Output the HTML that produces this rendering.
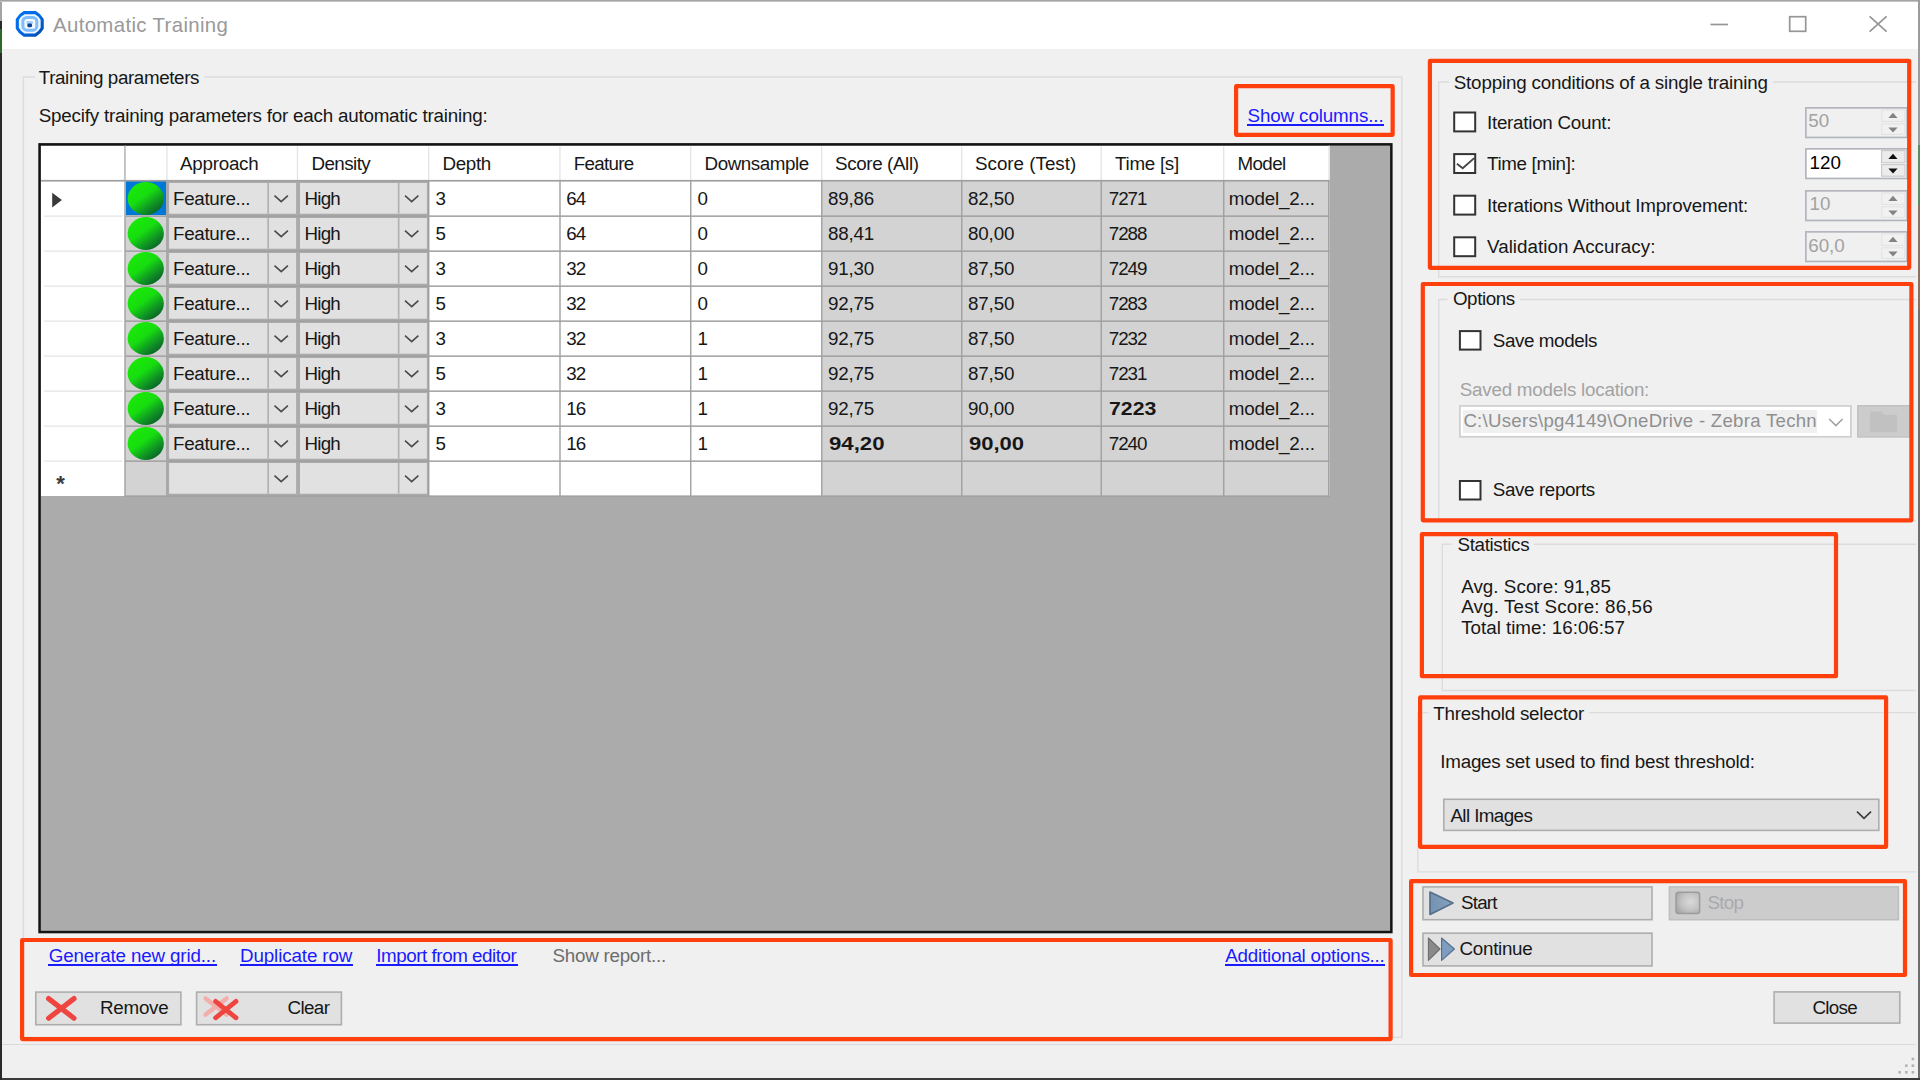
<!DOCTYPE html>
<html lang="en"><head><meta charset="utf-8"><title>Automatic Training</title>
<style>
html,body{margin:0;padding:0;}
body{width:1920px;height:1080px;overflow:hidden;background:#2b2b2b;position:relative;font-family:"Liberation Sans",Arial,sans-serif;}
.b{position:absolute;box-sizing:border-box;}
.t{position:absolute;white-space:pre;}
.ul{position:absolute;height:2px;display:block;}
svg{position:absolute;overflow:visible;}
</style></head><body>
<!-- window -->
<div class="b" style="left:0px;top:0px;width:1920px;height:1px;background:#a8a8a8;"></div>
<div class="b" style="left:2px;top:1px;width:1916px;height:48px;background:#ffffff;"></div>
<div class="b" style="left:2px;top:49px;width:1916px;height:1028.5px;background:#f0f0f0;"></div>
<div class="b" style="left:1918px;top:0px;width:2px;height:1078px;background:#9c9c9c;"></div>
<div class="b" style="left:1918px;top:145px;width:2px;height:933px;background:#5f7a5f;"></div>
<div class="b" style="left:0px;top:1077.5px;width:1920px;height:3px;background:#3a3a3a;"></div>
<div class="b" style="left:0px;top:0px;width:2px;height:1080px;background:#2a2a2a;"></div>
<div class="b" style="left:0px;top:0px;width:2px;height:21px;background:#a3a3a3;"></div>
<div class="b" style="left:0px;top:29px;width:2px;height:24px;background:#2c6a2c;"></div>
<div class="b" style="left:0px;top:0px;width:1920px;height:2px;background:#c4c4c4;"></div>
<div class="b" style="left:0px;top:0px;width:1920px;height:1px;background:#a3a3a3;"></div>
<svg style="left:12px;top:8px" width="36" height="32" viewBox="12 8 36 32">
<defs><linearGradient id="ti" x1="0" y1="0" x2="1" y2="1"><stop offset="0" stop-color="#0072f0"/><stop offset="0.55" stop-color="#0068e2"/><stop offset="1" stop-color="#004aa8"/></linearGradient></defs>
<path d="M24.10 12.60L35.40 12.60Q39.82 14.98 42.20 19.40L42.20 28.30Q39.82 32.72 35.40 35.10L24.10 35.10Q19.68 32.72 17.30 28.30L17.30 19.40Q19.68 14.98 24.10 12.60Z" fill="#eef6ff" stroke="url(#ti)" stroke-width="3.1" stroke-linejoin="round"/>
<rect x="22.9" y="17.5" width="13.9" height="12.7" rx="4" fill="#f4f9ff" stroke="#7fbdff" stroke-width="3"/>
<rect x="26.4" y="21" width="6.6" height="3" rx="1.2" fill="#a4d0ff"/>
<rect x="27.3" y="23.5" width="4.8" height="3.7" rx="1.4" fill="#0a4394"/>
</svg>
<span class="t" style="left:53.00px;top:13.00px;font-size:20.4px;line-height:24px;color:#999999;letter-spacing:0.353px;">Automatic Training</span>
<svg style="left:1700px;top:8px" width="200" height="34" viewBox="1700 8 200 34">
<path d="M1710.5 24.5H1728" stroke="#959595" stroke-width="1.7" fill="none"/>
<rect x="1789.7" y="16.7" width="16" height="14.6" stroke="#959595" stroke-width="1.7" fill="none"/>
<path d="M1869.6 16.4L1886.6 31.6M1886.6 16.4L1869.6 31.6" stroke="#959595" stroke-width="1.7" fill="none"/>
</svg>
<!-- training parameters -->
<svg style="left:0;top:0" width="1920" height="1080" viewBox="0 0 1920 1080"><path d="M35 77H23.4V1037.4H1401.8V77H204.4" fill="none" stroke="#dcdcdc" stroke-width="1.4"/></svg>
<span class="t" style="left:38.75px;top:66.00px;font-size:18.8px;line-height:23px;color:#171717;letter-spacing:-0.369px;">Training parameters</span>
<span class="t" style="left:38.75px;top:104.00px;font-size:18.8px;line-height:23px;color:#171717;letter-spacing:-0.209px;">Specify training parameters for each automatic training:</span>
<span class="t" style="left:1247.50px;top:104.00px;font-size:18.8px;line-height:23px;color:#1a1aff;letter-spacing:-0.118px;">Show columns...</span>
<i class="ul" style="left:1247.00px;top:124.20px;width:137.25px;background:#1a1aff"></i>
<!-- data grid -->
<div class="b" style="left:39px;top:144px;width:1353px;height:789px;background:#ababab;"></div>
<svg style="left:0;top:0" width="1920" height="1080" viewBox="0 0 1920 1080"><rect x="39.55" y="144.35" width="1351.8" height="787.6999999999999" fill="none" stroke="#141414" stroke-width="2.5"/></svg>
<div class="b" style="left:41px;top:145.5px;width:1288.55px;height:34.69999999999999px;background:#ffffff;"></div>
<div class="b" style="left:41px;top:180.2px;width:84px;height:315.40000000000003px;background:#ffffff;"></div>
<div class="b" style="left:125px;top:180.2px;width:42px;height:315.40000000000003px;background:#d3d3d3;"></div>
<div class="b" style="left:167px;top:180.2px;width:261.75px;height:315.40000000000003px;background:#ababab;"></div>
<div class="b" style="left:428.75px;top:180.2px;width:393.0px;height:315.40000000000003px;background:#ffffff;"></div>
<div class="b" style="left:821.75px;top:180.2px;width:507.8px;height:315.40000000000003px;background:#d3d3d3;"></div>
<div class="b" style="left:125.6px;top:181.29999999999998px;width:40.6px;height:33.6px;background:#0078d7;"></div>
<svg style="left:0;top:0" width="1920" height="1080" viewBox="0 0 1920 1080">
<defs><linearGradient id="gb" x1="0.2" y1="0.1" x2="0.85" y2="0.9"><stop offset="0" stop-color="#18ea06"/><stop offset="0.4" stop-color="#17dd10"/><stop offset="0.75" stop-color="#0f9224"/><stop offset="1" stop-color="#0a6228"/></linearGradient>
</defs>
<rect x="166.30" y="146.5" width="1.3" height="33.70" fill="#e4e4e4"/>
<rect x="296.80" y="146.5" width="1.3" height="33.70" fill="#e4e4e4"/>
<rect x="428.05" y="146.5" width="1.3" height="33.70" fill="#e4e4e4"/>
<rect x="559.30" y="146.5" width="1.3" height="33.70" fill="#e4e4e4"/>
<rect x="690.05" y="146.5" width="1.3" height="33.70" fill="#e4e4e4"/>
<rect x="821.05" y="146.5" width="1.3" height="33.70" fill="#e4e4e4"/>
<rect x="961.05" y="146.5" width="1.3" height="33.70" fill="#e4e4e4"/>
<rect x="1100.55" y="146.5" width="1.3" height="33.70" fill="#e4e4e4"/>
<rect x="1223.05" y="146.5" width="1.3" height="33.70" fill="#e4e4e4"/>
<rect x="124.30" y="145.5" width="1.3" height="34.70" fill="#a6a6a6"/>
<rect x="1328.55" y="145.5" width="1.1" height="34.70" fill="#d8d8d8"/>
<rect x="41" y="179.90" width="1288.55" height="1.7" fill="#a0a0a0"/>
<rect x="44" y="215.50" width="78.6" height="1.3" fill="#e6e6e6"/>
<rect x="125" y="215.40" width="1204.55" height="1.5" fill="#a0a0a0"/>
<rect x="44" y="250.50" width="78.6" height="1.3" fill="#e6e6e6"/>
<rect x="125" y="250.40" width="1204.55" height="1.5" fill="#a0a0a0"/>
<rect x="44" y="285.50" width="78.6" height="1.3" fill="#e6e6e6"/>
<rect x="125" y="285.40" width="1204.55" height="1.5" fill="#a0a0a0"/>
<rect x="44" y="320.50" width="78.6" height="1.3" fill="#e6e6e6"/>
<rect x="125" y="320.40" width="1204.55" height="1.5" fill="#a0a0a0"/>
<rect x="44" y="355.50" width="78.6" height="1.3" fill="#e6e6e6"/>
<rect x="125" y="355.40" width="1204.55" height="1.5" fill="#a0a0a0"/>
<rect x="44" y="390.50" width="78.6" height="1.3" fill="#e6e6e6"/>
<rect x="125" y="390.40" width="1204.55" height="1.5" fill="#a0a0a0"/>
<rect x="44" y="425.50" width="78.6" height="1.3" fill="#e6e6e6"/>
<rect x="125" y="425.40" width="1204.55" height="1.5" fill="#a0a0a0"/>
<rect x="44" y="460.50" width="78.6" height="1.3" fill="#e6e6e6"/>
<rect x="125" y="460.40" width="1204.55" height="1.5" fill="#a0a0a0"/>
<rect x="125" y="495.40" width="1204.55" height="1.5" fill="#a0a0a0"/>
<rect x="124.30" y="180.2" width="1.4" height="316.40" fill="#a0a0a0"/>
<rect x="428.05" y="180.2" width="1.4" height="316.40" fill="#a0a0a0"/>
<rect x="559.30" y="180.2" width="1.4" height="316.40" fill="#a0a0a0"/>
<rect x="690.05" y="180.2" width="1.4" height="316.40" fill="#a0a0a0"/>
<rect x="821.05" y="180.2" width="1.4" height="316.40" fill="#a0a0a0"/>
<rect x="961.05" y="180.2" width="1.4" height="316.40" fill="#a0a0a0"/>
<rect x="1100.55" y="180.2" width="1.4" height="316.40" fill="#a0a0a0"/>
<rect x="1223.05" y="180.2" width="1.4" height="316.40" fill="#a0a0a0"/>
<rect x="1328.05" y="180.2" width="1.4" height="316.40" fill="#a0a0a0"/>
<rect x="166.10" y="180.2" width="1.6" height="316.40" fill="#a6a6a6"/>
<ellipse cx="145.75" cy="198.50" rx="18.1" ry="16.4" fill="url(#gb)"/>
<ellipse cx="145.75" cy="233.50" rx="18.1" ry="16.4" fill="url(#gb)"/>
<ellipse cx="145.75" cy="268.50" rx="18.1" ry="16.4" fill="url(#gb)"/>
<ellipse cx="145.75" cy="303.50" rx="18.1" ry="16.4" fill="url(#gb)"/>
<ellipse cx="145.75" cy="338.50" rx="18.1" ry="16.4" fill="url(#gb)"/>
<ellipse cx="145.75" cy="373.50" rx="18.1" ry="16.4" fill="url(#gb)"/>
<ellipse cx="145.75" cy="408.50" rx="18.1" ry="16.4" fill="url(#gb)"/>
<ellipse cx="145.75" cy="443.50" rx="18.1" ry="16.4" fill="url(#gb)"/>
<rect x="169.10" y="183.00" width="127.00" height="30.70" fill="#e1e1e1"/>
<rect x="267.30" y="183.00" width="1.7" height="30.70" fill="#b2b2b2"/>
<path d="M274.50 195.70L281.20 201.70L287.90 195.70" stroke="#4a4a4a" stroke-width="1.6" fill="none"/>
<rect x="300.00" y="183.00" width="126.90" height="30.70" fill="#e1e1e1"/>
<rect x="397.80" y="183.00" width="1.7" height="30.70" fill="#b2b2b2"/>
<path d="M405.00 195.70L411.70 201.70L418.40 195.70" stroke="#4a4a4a" stroke-width="1.6" fill="none"/>
<rect x="169.10" y="218.00" width="127.00" height="30.70" fill="#e1e1e1"/>
<rect x="267.30" y="218.00" width="1.7" height="30.70" fill="#b2b2b2"/>
<path d="M274.50 230.70L281.20 236.70L287.90 230.70" stroke="#4a4a4a" stroke-width="1.6" fill="none"/>
<rect x="300.00" y="218.00" width="126.90" height="30.70" fill="#e1e1e1"/>
<rect x="397.80" y="218.00" width="1.7" height="30.70" fill="#b2b2b2"/>
<path d="M405.00 230.70L411.70 236.70L418.40 230.70" stroke="#4a4a4a" stroke-width="1.6" fill="none"/>
<rect x="169.10" y="253.00" width="127.00" height="30.70" fill="#e1e1e1"/>
<rect x="267.30" y="253.00" width="1.7" height="30.70" fill="#b2b2b2"/>
<path d="M274.50 265.70L281.20 271.70L287.90 265.70" stroke="#4a4a4a" stroke-width="1.6" fill="none"/>
<rect x="300.00" y="253.00" width="126.90" height="30.70" fill="#e1e1e1"/>
<rect x="397.80" y="253.00" width="1.7" height="30.70" fill="#b2b2b2"/>
<path d="M405.00 265.70L411.70 271.70L418.40 265.70" stroke="#4a4a4a" stroke-width="1.6" fill="none"/>
<rect x="169.10" y="288.00" width="127.00" height="30.70" fill="#e1e1e1"/>
<rect x="267.30" y="288.00" width="1.7" height="30.70" fill="#b2b2b2"/>
<path d="M274.50 300.70L281.20 306.70L287.90 300.70" stroke="#4a4a4a" stroke-width="1.6" fill="none"/>
<rect x="300.00" y="288.00" width="126.90" height="30.70" fill="#e1e1e1"/>
<rect x="397.80" y="288.00" width="1.7" height="30.70" fill="#b2b2b2"/>
<path d="M405.00 300.70L411.70 306.70L418.40 300.70" stroke="#4a4a4a" stroke-width="1.6" fill="none"/>
<rect x="169.10" y="323.00" width="127.00" height="30.70" fill="#e1e1e1"/>
<rect x="267.30" y="323.00" width="1.7" height="30.70" fill="#b2b2b2"/>
<path d="M274.50 335.70L281.20 341.70L287.90 335.70" stroke="#4a4a4a" stroke-width="1.6" fill="none"/>
<rect x="300.00" y="323.00" width="126.90" height="30.70" fill="#e1e1e1"/>
<rect x="397.80" y="323.00" width="1.7" height="30.70" fill="#b2b2b2"/>
<path d="M405.00 335.70L411.70 341.70L418.40 335.70" stroke="#4a4a4a" stroke-width="1.6" fill="none"/>
<rect x="169.10" y="358.00" width="127.00" height="30.70" fill="#e1e1e1"/>
<rect x="267.30" y="358.00" width="1.7" height="30.70" fill="#b2b2b2"/>
<path d="M274.50 370.70L281.20 376.70L287.90 370.70" stroke="#4a4a4a" stroke-width="1.6" fill="none"/>
<rect x="300.00" y="358.00" width="126.90" height="30.70" fill="#e1e1e1"/>
<rect x="397.80" y="358.00" width="1.7" height="30.70" fill="#b2b2b2"/>
<path d="M405.00 370.70L411.70 376.70L418.40 370.70" stroke="#4a4a4a" stroke-width="1.6" fill="none"/>
<rect x="169.10" y="393.00" width="127.00" height="30.70" fill="#e1e1e1"/>
<rect x="267.30" y="393.00" width="1.7" height="30.70" fill="#b2b2b2"/>
<path d="M274.50 405.70L281.20 411.70L287.90 405.70" stroke="#4a4a4a" stroke-width="1.6" fill="none"/>
<rect x="300.00" y="393.00" width="126.90" height="30.70" fill="#e1e1e1"/>
<rect x="397.80" y="393.00" width="1.7" height="30.70" fill="#b2b2b2"/>
<path d="M405.00 405.70L411.70 411.70L418.40 405.70" stroke="#4a4a4a" stroke-width="1.6" fill="none"/>
<rect x="169.10" y="428.00" width="127.00" height="30.70" fill="#e1e1e1"/>
<rect x="267.30" y="428.00" width="1.7" height="30.70" fill="#b2b2b2"/>
<path d="M274.50 440.70L281.20 446.70L287.90 440.70" stroke="#4a4a4a" stroke-width="1.6" fill="none"/>
<rect x="300.00" y="428.00" width="126.90" height="30.70" fill="#e1e1e1"/>
<rect x="397.80" y="428.00" width="1.7" height="30.70" fill="#b2b2b2"/>
<path d="M405.00 440.70L411.70 446.70L418.40 440.70" stroke="#4a4a4a" stroke-width="1.6" fill="none"/>
<rect x="169.10" y="463.00" width="127.00" height="30.70" fill="#e1e1e1"/>
<rect x="267.30" y="463.00" width="1.7" height="30.70" fill="#b2b2b2"/>
<path d="M274.50 475.70L281.20 481.70L287.90 475.70" stroke="#4a4a4a" stroke-width="1.6" fill="none"/>
<rect x="300.00" y="463.00" width="126.90" height="30.70" fill="#e1e1e1"/>
<rect x="397.80" y="463.00" width="1.7" height="30.70" fill="#b2b2b2"/>
<path d="M405.00 475.70L411.70 481.70L418.40 475.70" stroke="#4a4a4a" stroke-width="1.6" fill="none"/>
<path d="M52.2 192.8L61.9 200.1L52.2 207.4Z" fill="#3a3a3a"/>
</svg>
<span class="t" style="left:180.00px;top:152.00px;font-size:18.8px;line-height:23px;color:#171717;letter-spacing:-0.246px;">Approach</span>
<span class="t" style="left:311.50px;top:152.00px;font-size:18.8px;line-height:23px;color:#171717;letter-spacing:-0.570px;">Density</span>
<span class="t" style="left:442.50px;top:152.00px;font-size:18.8px;line-height:23px;color:#171717;letter-spacing:-0.352px;">Depth</span>
<span class="t" style="left:573.75px;top:152.00px;font-size:18.8px;line-height:23px;color:#171717;letter-spacing:-0.714px;">Feature</span>
<span class="t" style="left:704.50px;top:152.00px;font-size:18.8px;line-height:23px;color:#171717;letter-spacing:-0.434px;">Downsample</span>
<span class="t" style="left:835.00px;top:152.00px;font-size:18.8px;line-height:23px;color:#171717;letter-spacing:-0.373px;">Score (All)</span>
<span class="t" style="left:975.00px;top:152.00px;font-size:18.8px;line-height:23px;color:#171717;letter-spacing:-0.006px;">Score (Test)</span>
<span class="t" style="left:1115.00px;top:152.00px;font-size:18.8px;line-height:23px;color:#171717;letter-spacing:-0.270px;">Time [s]</span>
<span class="t" style="left:1237.50px;top:152.00px;font-size:18.8px;line-height:23px;color:#171717;letter-spacing:-0.613px;">Model</span>
<span class="t" style="left:173.00px;top:187.00px;font-size:18.8px;line-height:23px;color:#171717;letter-spacing:-0.317px;">Feature...</span>
<span class="t" style="left:304.50px;top:187.00px;font-size:18.8px;line-height:23px;color:#171717;letter-spacing:-0.802px;">High</span>
<span class="t" style="left:435.60px;top:187.00px;font-size:18.8px;line-height:23px;color:#171717;">3</span>
<span class="t" style="left:566.30px;top:187.00px;font-size:18.8px;line-height:23px;color:#171717;letter-spacing:-0.956px;">64</span>
<span class="t" style="left:697.60px;top:187.00px;font-size:18.8px;line-height:23px;color:#171717;">0</span>
<span class="t" style="left:828.00px;top:187.00px;font-size:18.8px;line-height:23px;color:#171717;letter-spacing:-0.195px;">89,86</span>
<span class="t" style="left:968.00px;top:187.00px;font-size:18.8px;line-height:23px;color:#171717;letter-spacing:-0.133px;">82,50</span>
<span class="t" style="left:1108.75px;top:187.00px;font-size:18.8px;line-height:23px;color:#171717;letter-spacing:-1.021px;">7271</span>
<span class="t" style="left:1228.75px;top:187.00px;font-size:18.8px;line-height:23px;color:#171717;letter-spacing:-0.168px;">model_2...</span>
<span class="t" style="left:173.00px;top:222.00px;font-size:18.8px;line-height:23px;color:#171717;letter-spacing:-0.317px;">Feature...</span>
<span class="t" style="left:304.50px;top:222.00px;font-size:18.8px;line-height:23px;color:#171717;letter-spacing:-0.802px;">High</span>
<span class="t" style="left:435.60px;top:222.00px;font-size:18.8px;line-height:23px;color:#171717;">5</span>
<span class="t" style="left:566.30px;top:222.00px;font-size:18.8px;line-height:23px;color:#171717;letter-spacing:-0.956px;">64</span>
<span class="t" style="left:697.60px;top:222.00px;font-size:18.8px;line-height:23px;color:#171717;">0</span>
<span class="t" style="left:828.00px;top:222.00px;font-size:18.8px;line-height:23px;color:#171717;letter-spacing:-0.195px;">88,41</span>
<span class="t" style="left:968.00px;top:222.00px;font-size:18.8px;line-height:23px;color:#171717;letter-spacing:-0.133px;">80,00</span>
<span class="t" style="left:1108.75px;top:222.00px;font-size:18.8px;line-height:23px;color:#171717;letter-spacing:-1.021px;">7288</span>
<span class="t" style="left:1228.75px;top:222.00px;font-size:18.8px;line-height:23px;color:#171717;letter-spacing:-0.168px;">model_2...</span>
<span class="t" style="left:173.00px;top:257.00px;font-size:18.8px;line-height:23px;color:#171717;letter-spacing:-0.317px;">Feature...</span>
<span class="t" style="left:304.50px;top:257.00px;font-size:18.8px;line-height:23px;color:#171717;letter-spacing:-0.802px;">High</span>
<span class="t" style="left:435.60px;top:257.00px;font-size:18.8px;line-height:23px;color:#171717;">3</span>
<span class="t" style="left:566.30px;top:257.00px;font-size:18.8px;line-height:23px;color:#171717;letter-spacing:-0.956px;">32</span>
<span class="t" style="left:697.60px;top:257.00px;font-size:18.8px;line-height:23px;color:#171717;">0</span>
<span class="t" style="left:828.00px;top:257.00px;font-size:18.8px;line-height:23px;color:#171717;letter-spacing:-0.195px;">91,30</span>
<span class="t" style="left:968.00px;top:257.00px;font-size:18.8px;line-height:23px;color:#171717;letter-spacing:-0.133px;">87,50</span>
<span class="t" style="left:1108.75px;top:257.00px;font-size:18.8px;line-height:23px;color:#171717;letter-spacing:-1.021px;">7249</span>
<span class="t" style="left:1228.75px;top:257.00px;font-size:18.8px;line-height:23px;color:#171717;letter-spacing:-0.168px;">model_2...</span>
<span class="t" style="left:173.00px;top:292.00px;font-size:18.8px;line-height:23px;color:#171717;letter-spacing:-0.317px;">Feature...</span>
<span class="t" style="left:304.50px;top:292.00px;font-size:18.8px;line-height:23px;color:#171717;letter-spacing:-0.802px;">High</span>
<span class="t" style="left:435.60px;top:292.00px;font-size:18.8px;line-height:23px;color:#171717;">5</span>
<span class="t" style="left:566.30px;top:292.00px;font-size:18.8px;line-height:23px;color:#171717;letter-spacing:-0.956px;">32</span>
<span class="t" style="left:697.60px;top:292.00px;font-size:18.8px;line-height:23px;color:#171717;">0</span>
<span class="t" style="left:828.00px;top:292.00px;font-size:18.8px;line-height:23px;color:#171717;letter-spacing:-0.195px;">92,75</span>
<span class="t" style="left:968.00px;top:292.00px;font-size:18.8px;line-height:23px;color:#171717;letter-spacing:-0.133px;">87,50</span>
<span class="t" style="left:1108.75px;top:292.00px;font-size:18.8px;line-height:23px;color:#171717;letter-spacing:-1.021px;">7283</span>
<span class="t" style="left:1228.75px;top:292.00px;font-size:18.8px;line-height:23px;color:#171717;letter-spacing:-0.168px;">model_2...</span>
<span class="t" style="left:173.00px;top:327.00px;font-size:18.8px;line-height:23px;color:#171717;letter-spacing:-0.317px;">Feature...</span>
<span class="t" style="left:304.50px;top:327.00px;font-size:18.8px;line-height:23px;color:#171717;letter-spacing:-0.802px;">High</span>
<span class="t" style="left:435.60px;top:327.00px;font-size:18.8px;line-height:23px;color:#171717;">3</span>
<span class="t" style="left:566.30px;top:327.00px;font-size:18.8px;line-height:23px;color:#171717;letter-spacing:-0.956px;">32</span>
<span class="t" style="left:697.60px;top:327.00px;font-size:18.8px;line-height:23px;color:#171717;">1</span>
<span class="t" style="left:828.00px;top:327.00px;font-size:18.8px;line-height:23px;color:#171717;letter-spacing:-0.195px;">92,75</span>
<span class="t" style="left:968.00px;top:327.00px;font-size:18.8px;line-height:23px;color:#171717;letter-spacing:-0.133px;">87,50</span>
<span class="t" style="left:1108.75px;top:327.00px;font-size:18.8px;line-height:23px;color:#171717;letter-spacing:-1.021px;">7232</span>
<span class="t" style="left:1228.75px;top:327.00px;font-size:18.8px;line-height:23px;color:#171717;letter-spacing:-0.168px;">model_2...</span>
<span class="t" style="left:173.00px;top:362.00px;font-size:18.8px;line-height:23px;color:#171717;letter-spacing:-0.317px;">Feature...</span>
<span class="t" style="left:304.50px;top:362.00px;font-size:18.8px;line-height:23px;color:#171717;letter-spacing:-0.802px;">High</span>
<span class="t" style="left:435.60px;top:362.00px;font-size:18.8px;line-height:23px;color:#171717;">5</span>
<span class="t" style="left:566.30px;top:362.00px;font-size:18.8px;line-height:23px;color:#171717;letter-spacing:-0.956px;">32</span>
<span class="t" style="left:697.60px;top:362.00px;font-size:18.8px;line-height:23px;color:#171717;">1</span>
<span class="t" style="left:828.00px;top:362.00px;font-size:18.8px;line-height:23px;color:#171717;letter-spacing:-0.195px;">92,75</span>
<span class="t" style="left:968.00px;top:362.00px;font-size:18.8px;line-height:23px;color:#171717;letter-spacing:-0.133px;">87,50</span>
<span class="t" style="left:1108.75px;top:362.00px;font-size:18.8px;line-height:23px;color:#171717;letter-spacing:-1.021px;">7231</span>
<span class="t" style="left:1228.75px;top:362.00px;font-size:18.8px;line-height:23px;color:#171717;letter-spacing:-0.168px;">model_2...</span>
<span class="t" style="left:173.00px;top:397.00px;font-size:18.8px;line-height:23px;color:#171717;letter-spacing:-0.317px;">Feature...</span>
<span class="t" style="left:304.50px;top:397.00px;font-size:18.8px;line-height:23px;color:#171717;letter-spacing:-0.802px;">High</span>
<span class="t" style="left:435.60px;top:397.00px;font-size:18.8px;line-height:23px;color:#171717;">3</span>
<span class="t" style="left:566.30px;top:397.00px;font-size:18.8px;line-height:23px;color:#171717;letter-spacing:-0.956px;">16</span>
<span class="t" style="left:697.60px;top:397.00px;font-size:18.8px;line-height:23px;color:#171717;">1</span>
<span class="t" style="left:828.00px;top:397.00px;font-size:18.8px;line-height:23px;color:#171717;letter-spacing:-0.195px;">92,75</span>
<span class="t" style="left:968.00px;top:397.00px;font-size:18.8px;line-height:23px;color:#171717;letter-spacing:-0.133px;">90,00</span>
<span class="t" style="left:1108.90px;top:397.00px;font-size:18.5px;line-height:23px;color:#171717;font-weight:bold;transform:scaleX(1.1505);transform-origin:0 0;">7223</span>
<span class="t" style="left:1228.75px;top:397.00px;font-size:18.8px;line-height:23px;color:#171717;letter-spacing:-0.168px;">model_2...</span>
<span class="t" style="left:173.00px;top:432.00px;font-size:18.8px;line-height:23px;color:#171717;letter-spacing:-0.317px;">Feature...</span>
<span class="t" style="left:304.50px;top:432.00px;font-size:18.8px;line-height:23px;color:#171717;letter-spacing:-0.802px;">High</span>
<span class="t" style="left:435.60px;top:432.00px;font-size:18.8px;line-height:23px;color:#171717;">5</span>
<span class="t" style="left:566.30px;top:432.00px;font-size:18.8px;line-height:23px;color:#171717;letter-spacing:-0.956px;">16</span>
<span class="t" style="left:697.60px;top:432.00px;font-size:18.8px;line-height:23px;color:#171717;">1</span>
<span class="t" style="left:828.90px;top:432.00px;font-size:18.5px;line-height:23px;color:#171717;font-weight:bold;transform:scaleX(1.1988);transform-origin:0 0;">94,20</span>
<span class="t" style="left:968.90px;top:432.00px;font-size:18.5px;line-height:23px;color:#171717;font-weight:bold;transform:scaleX(1.1901);transform-origin:0 0;">90,00</span>
<span class="t" style="left:1108.75px;top:432.00px;font-size:18.8px;line-height:23px;color:#171717;letter-spacing:-1.021px;">7240</span>
<span class="t" style="left:1228.75px;top:432.00px;font-size:18.8px;line-height:23px;color:#171717;letter-spacing:-0.168px;">model_2...</span>
<span class="t" style="left:56.20px;top:470.00px;font-size:22px;line-height:27px;color:#3a3a3a;font-weight:bold;">*</span>
<!-- bottom actions -->
<span class="t" style="left:48.75px;top:944.00px;font-size:18.8px;line-height:23px;color:#1a1aff;letter-spacing:-0.148px;">Generate new grid...</span>
<i class="ul" style="left:48.25px;top:963.80px;width:168.50px;background:#1a1aff"></i>
<span class="t" style="left:240.00px;top:944.00px;font-size:18.8px;line-height:23px;color:#1a1aff;letter-spacing:-0.118px;">Duplicate row</span>
<i class="ul" style="left:239.50px;top:963.80px;width:113.50px;background:#1a1aff"></i>
<span class="t" style="left:376.25px;top:944.00px;font-size:18.8px;line-height:23px;color:#1a1aff;letter-spacing:-0.446px;">Import from editor</span>
<i class="ul" style="left:375.75px;top:963.80px;width:141.75px;background:#1a1aff"></i>
<span class="t" style="left:552.50px;top:944.00px;font-size:18.8px;line-height:23px;color:#6d6d6d;letter-spacing:-0.251px;">Show report...</span>
<span class="t" style="left:1225.30px;top:944.00px;font-size:18.8px;line-height:23px;color:#1a1aff;letter-spacing:-0.223px;">Additional options...</span>
<i class="ul" style="left:1224.80px;top:963.80px;width:160.60px;background:#1a1aff"></i>
<svg style="left:0;top:0" width="1920" height="1080" viewBox="0 0 1920 1080"><rect x="35.80" y="992.10" width="145.10" height="32.60" fill="#e1e1e1" stroke="#adadad" stroke-width="1.6"/></svg>
<svg style="left:0;top:0" width="1920" height="1080" viewBox="0 0 1920 1080"><rect x="196.60" y="992.10" width="144.80" height="32.60" fill="#e1e1e1" stroke="#adadad" stroke-width="1.6"/></svg>
<svg style="left:44px;top:994px" width="36" height="30" viewBox="44 994 36 30">
<path d="M48.6 998.6L74 1018.2M74 998.6L48.6 1018.2" stroke="#ee4540" stroke-width="5.2" stroke-linecap="round" fill="none"/></svg>
<svg style="left:200px;top:994px" width="44" height="30" viewBox="200 994 44 30">
<path d="M205.6 998.4L226.6 1014.6M226.6 998.4L205.6 1014.6" stroke="#f3a5a0" stroke-width="4.4" stroke-linecap="round" fill="none" opacity="0.85"/>
<path d="M215.6 1001.4L236 1017.8M236 1001.4L215.6 1017.8" stroke="#ee4540" stroke-width="4.8" stroke-linecap="round" fill="none"/></svg>
<span class="t" style="left:100.00px;top:996.00px;font-size:18.8px;line-height:23px;color:#171717;letter-spacing:-0.250px;">Remove</span>
<span class="t" style="left:287.50px;top:996.00px;font-size:18.8px;line-height:23px;color:#171717;letter-spacing:-0.605px;">Clear</span>
<div class="b" style="left:2px;top:1043.6px;width:1914.5px;height:1.6px;background:#dadada;"></div>
<!-- stopping conditions -->
<svg style="left:0;top:0" width="1920" height="1080" viewBox="0 0 1920 1080"><path d="M1449.4 82H1438.7V276.7H2918.7V82H1773" fill="none" stroke="#dcdcdc" stroke-width="1.4"/></svg>
<span class="t" style="left:1453.75px;top:71.00px;font-size:18.8px;line-height:23px;color:#171717;letter-spacing:-0.187px;">Stopping conditions of a single training</span>
<svg style="left:0;top:0" width="1920" height="1080" viewBox="0 0 1920 1080"><rect x="1454.20" y="112.50" width="21.0" height="18.9" fill="#fff" stroke="#333" stroke-width="2"/></svg>
<span class="t" style="left:1487.00px;top:111.00px;font-size:18.8px;line-height:23px;color:#171717;letter-spacing:-0.261px;">Iteration Count:</span>
<svg style="left:1805px;top:107.00px" width="103" height="32.3" viewBox="0 0 103 32.3"><rect x="0.85" y="0.85" width="101.3" height="29.60" fill="#f0f0f0" stroke="#b2b5be" stroke-width="1.7"/></svg>
<svg style="left:1880px;top:107.0px" width="28" height="32" viewBox="0 0 28 32"><rect x="1.8" y="3" width="23" height="11.4" fill="#f1f1f1" stroke="#e2e2e2" stroke-width="1"/><rect x="1.8" y="16.8" width="23" height="10.6" fill="#f1f1f1" stroke="#e2e2e2" stroke-width="1"/><path d="M8.4 11L13 5.8L17.6 11Z" fill="#838383"/><path d="M8.4 20.4L13 25.6L17.6 20.4Z" fill="#838383"/></svg>
<span class="t" style="left:1808.20px;top:109.00px;font-size:18.8px;line-height:23px;color:#a2a2a2;">50</span>
<svg style="left:0;top:0" width="1920" height="1080" viewBox="0 0 1920 1080"><rect x="1454.20" y="154.10" width="21.0" height="18.9" fill="#fff" stroke="#333" stroke-width="2"/><path d="M1456.90 163.80L1462.70 168.30L1474.20 158.10" stroke="#454545" stroke-width="1.9" fill="none"/></svg>
<span class="t" style="left:1487.00px;top:152.00px;font-size:18.8px;line-height:23px;color:#171717;letter-spacing:-0.345px;">Time [min]:</span>
<svg style="left:1805px;top:148.40px" width="103" height="32.3" viewBox="0 0 103 32.3"><rect x="0.85" y="0.85" width="101.3" height="29.60" fill="#ffffff" stroke="#b2b5be" stroke-width="1.7"/></svg>
<svg style="left:1880px;top:148.4px" width="28" height="32" viewBox="0 0 28 32"><rect x="1.6" y="2.6" width="23.4" height="12.2" fill="#ececec" stroke="#c4c4c4" stroke-width="1"/><rect x="1.6" y="16.6" width="23.4" height="11.6" fill="#ececec" stroke="#c4c4c4" stroke-width="1"/><path d="M8.4 11L13 5.8L17.6 11Z" fill="#111"/><path d="M8.4 20.4L13 25.6L17.6 20.4Z" fill="#111"/></svg>
<span class="t" style="left:1809.50px;top:151.00px;font-size:18.8px;line-height:23px;color:#000;">120</span>
<svg style="left:0;top:0" width="1920" height="1080" viewBox="0 0 1920 1080"><rect x="1454.20" y="195.70" width="21.0" height="18.9" fill="#fff" stroke="#333" stroke-width="2"/></svg>
<span class="t" style="left:1487.00px;top:194.00px;font-size:18.8px;line-height:23px;color:#171717;letter-spacing:-0.163px;">Iterations Without Improvement:</span>
<svg style="left:1805px;top:189.80px" width="103" height="32.3" viewBox="0 0 103 32.3"><rect x="0.85" y="0.85" width="101.3" height="29.60" fill="#f0f0f0" stroke="#b2b5be" stroke-width="1.7"/></svg>
<svg style="left:1880px;top:189.8px" width="28" height="32" viewBox="0 0 28 32"><rect x="1.8" y="3" width="23" height="11.4" fill="#f1f1f1" stroke="#e2e2e2" stroke-width="1"/><rect x="1.8" y="16.8" width="23" height="10.6" fill="#f1f1f1" stroke="#e2e2e2" stroke-width="1"/><path d="M8.4 11L13 5.8L17.6 11Z" fill="#838383"/><path d="M8.4 20.4L13 25.6L17.6 20.4Z" fill="#838383"/></svg>
<span class="t" style="left:1809.50px;top:192.00px;font-size:18.8px;line-height:23px;color:#a2a2a2;">10</span>
<svg style="left:0;top:0" width="1920" height="1080" viewBox="0 0 1920 1080"><rect x="1454.20" y="237.30" width="21.0" height="18.9" fill="#fff" stroke="#333" stroke-width="2"/></svg>
<span class="t" style="left:1487.00px;top:235.00px;font-size:18.8px;line-height:23px;color:#171717;letter-spacing:0.033px;">Validation Accuracy:</span>
<svg style="left:1805px;top:231.20px" width="103" height="32.3" viewBox="0 0 103 32.3"><rect x="0.85" y="0.85" width="101.3" height="29.60" fill="#f0f0f0" stroke="#b2b5be" stroke-width="1.7"/></svg>
<svg style="left:1880px;top:231.2px" width="28" height="32" viewBox="0 0 28 32"><rect x="1.8" y="3" width="23" height="11.4" fill="#f1f1f1" stroke="#e2e2e2" stroke-width="1"/><rect x="1.8" y="16.8" width="23" height="10.6" fill="#f1f1f1" stroke="#e2e2e2" stroke-width="1"/><path d="M8.4 11L13 5.8L17.6 11Z" fill="#838383"/><path d="M8.4 20.4L13 25.6L17.6 20.4Z" fill="#838383"/></svg>
<span class="t" style="left:1808.20px;top:234.00px;font-size:18.8px;line-height:23px;color:#a2a2a2;">60,0</span>
<!-- options -->
<svg style="left:0;top:0" width="1920" height="1080" viewBox="0 0 1920 1080"><path d="M1447.5 299.5H1438.75V520.5H2918.75V299.5H1520" fill="none" stroke="#dcdcdc" stroke-width="1.4"/></svg>
<span class="t" style="left:1452.90px;top:287.00px;font-size:18.8px;line-height:23px;color:#171717;letter-spacing:-0.397px;">Options</span>
<svg style="left:0;top:0" width="1920" height="1080" viewBox="0 0 1920 1080"><rect x="1459.90" y="331.10" width="20.6" height="18.5" fill="#fff" stroke="#333" stroke-width="2"/></svg>
<span class="t" style="left:1492.80px;top:329.00px;font-size:18.8px;line-height:23px;color:#171717;letter-spacing:-0.396px;">Save models</span>
<span class="t" style="left:1459.70px;top:378.00px;font-size:18.8px;line-height:23px;color:#a3a3a3;letter-spacing:-0.216px;">Saved models location:</span>
<svg style="left:0;top:0" width="1920" height="1080" viewBox="0 0 1920 1080"><rect x="1459.90" y="405.90" width="391.00" height="30.90" fill="#ffffff" stroke="#d0d0d0" stroke-width="1.8"/></svg>
<div class="b" style="left:1463px;top:409.5px;width:354px;height:23.3px;background:#f0f0f0;"></div>
<span class="t" style="left:1463.40px;top:409.00px;font-size:18.6px;line-height:23px;color:#8f8f8f;letter-spacing:0.285px;">C:\Users\pg4149\OneDrive - Zebra Techn</span>
<svg style="left:1826px;top:413.5px" width="20" height="16" viewBox="0 0 20 16"><path d="M3.2 5L9.9 11.6L16.6 5" stroke="#a2a2a2" stroke-width="1.6" fill="none"/></svg>
<svg style="left:0;top:0" width="1920" height="1080" viewBox="0 0 1920 1080"><rect x="1857.80" y="405.80" width="52.40" height="31.10" fill="#cccccc" stroke="#c2c2c2" stroke-width="1.6"/></svg>
<svg style="left:1866px;top:409px" width="40" height="26" viewBox="0 0 40 26"><path d="M4 2.5h11l3 3.2h13v17.5H4z" fill="#c1c1c1"/></svg>
<svg style="left:0;top:0" width="1920" height="1080" viewBox="0 0 1920 1080"><rect x="1459.90" y="481.00" width="20.6" height="18.5" fill="#fff" stroke="#333" stroke-width="2"/></svg>
<span class="t" style="left:1492.80px;top:478.00px;font-size:18.8px;line-height:23px;color:#171717;letter-spacing:-0.369px;">Save reports</span>
<!-- statistics -->
<svg style="left:0;top:0" width="1920" height="1080" viewBox="0 0 1920 1080"><path d="M1451.5 544.3H1442.3V690.5H2922.3V544.3H1534" fill="none" stroke="#dcdcdc" stroke-width="1.4"/></svg>
<span class="t" style="left:1457.50px;top:533.00px;font-size:18.8px;line-height:23px;color:#171717;letter-spacing:-0.345px;">Statistics</span>
<span class="t" style="left:1461.20px;top:575.00px;font-size:18.8px;line-height:23px;color:#171717;letter-spacing:0.045px;">Avg. Score: 91,85</span>
<span class="t" style="left:1461.20px;top:595.00px;font-size:18.8px;line-height:23px;color:#171717;letter-spacing:0.151px;">Avg. Test Score: 86,56</span>
<span class="t" style="left:1461.20px;top:616.00px;font-size:18.8px;line-height:23px;color:#171717;letter-spacing:-0.013px;">Total time: 16:06:57</span>
<!-- threshold selector -->
<svg style="left:0;top:0" width="1920" height="1080" viewBox="0 0 1920 1080"><path d="M1428.5 712.6H1417.8V871.9000000000001H2917.8V712.6H1589" fill="none" stroke="#dcdcdc" stroke-width="1.4"/></svg>
<span class="t" style="left:1433.20px;top:702.00px;font-size:18.8px;line-height:23px;color:#171717;letter-spacing:-0.201px;">Threshold selector</span>
<span class="t" style="left:1440.20px;top:750.00px;font-size:18.8px;line-height:23px;color:#171717;letter-spacing:-0.205px;">Images set used to find best threshold:</span>
<svg style="left:0;top:0" width="1920" height="1080" viewBox="0 0 1920 1080"><rect x="1443.80" y="799.30" width="435.00" height="31.10" fill="#e1e1e1" stroke="#adadad" stroke-width="1.6"/></svg>
<span class="t" style="left:1450.40px;top:804.00px;font-size:18.8px;line-height:23px;color:#171717;letter-spacing:-0.583px;">All Images</span>
<svg style="left:1853px;top:806px" width="22" height="18" viewBox="0 0 22 18"><path d="M4 5.6L11 12.4L18 5.6" stroke="#3a3a3a" stroke-width="1.6" fill="none"/></svg>
<!-- start / stop / continue / close -->
<svg style="left:0;top:0" width="1920" height="1080" viewBox="0 0 1920 1080"><rect x="1423.00" y="886.90" width="229.00" height="32.80" fill="#e1e1e1" stroke="#adadad" stroke-width="1.6"/></svg>
<svg style="left:0;top:0" width="1920" height="1080" viewBox="0 0 1920 1080"><rect x="1669.40" y="886.90" width="229.00" height="32.80" fill="#cccccc" stroke="#bfbfbf" stroke-width="1.6"/></svg>
<svg style="left:0;top:0" width="1920" height="1080" viewBox="0 0 1920 1080"><rect x="1423.00" y="933.20" width="229.00" height="32.70" fill="#e1e1e1" stroke="#adadad" stroke-width="1.6"/></svg>
<svg style="left:0;top:0" width="1920" height="1080" viewBox="0 0 1920 1080"><rect x="1774.10" y="991.90" width="125.70" height="31.20" fill="#e1e1e1" stroke="#adadad" stroke-width="1.6"/></svg>
<svg style="left:1426px;top:888px" width="34" height="30" viewBox="0 0 34 30"><defs><linearGradient id="pl" x1="0" y1="0" x2="1" y2="0"><stop offset="0" stop-color="#7592b1"/><stop offset="1" stop-color="#84a1bf"/></linearGradient></defs>
<path d="M4 4L27 15L4 26.4Z" fill="url(#pl)" stroke="#56708c" stroke-width="1.7" stroke-linejoin="round"/></svg>
<svg style="left:1425px;top:934px" width="36" height="30" viewBox="0 0 36 30">
<path d="M3.4 4L15 15L3.4 26.4Z" fill="#8a8a8a" stroke="#6e6e6e" stroke-width="1.1" stroke-linejoin="round"/>
<path d="M16.6 4L29.4 15L16.6 26.4Z" fill="#7f9dc0" stroke="#55728f" stroke-width="1.2" stroke-linejoin="round"/></svg>
<svg style="left:1674px;top:890px" width="28" height="26" viewBox="0 0 28 26"><defs><radialGradient id="sg" cx="0.62" cy="0.45" r="0.75"><stop offset="0" stop-color="#dadada"/><stop offset="0.55" stop-color="#c2c2c2"/><stop offset="1" stop-color="#a2a2a2"/></radialGradient></defs>
<rect x="2" y="2.2" width="23.6" height="21.2" rx="2.5" fill="url(#sg)" stroke="#9c9c9c" stroke-width="1.5"/></svg>
<span class="t" style="left:1461.00px;top:891.00px;font-size:18.8px;line-height:23px;color:#171717;letter-spacing:-0.801px;">Start</span>
<span class="t" style="left:1707.40px;top:891.00px;font-size:18.8px;line-height:23px;color:#a9a9ad;letter-spacing:-0.691px;">Stop</span>
<span class="t" style="left:1459.60px;top:937.00px;font-size:18.8px;line-height:23px;color:#171717;letter-spacing:-0.307px;">Continue</span>
<span class="t" style="left:1812.50px;top:996.00px;font-size:18.8px;line-height:23px;color:#171717;letter-spacing:-0.716px;">Close</span>
<svg style="left:0;top:0" width="1920" height="1080" viewBox="0 0 1920 1080"><g fill="#b4b4b4"><rect x="1911.6" y="1057.7" width="2.6" height="2.6"/><rect x="1905.0" y="1064.4" width="2.6" height="2.6"/><rect x="1911.6" y="1064.4" width="2.6" height="2.6"/><rect x="1898.4" y="1071.0" width="2.6" height="2.6"/><rect x="1905.0" y="1071.0" width="2.6" height="2.6"/><rect x="1911.6" y="1071.0" width="2.6" height="2.6"/></g></svg>
<div class="b" style="left:1916.4px;top:49px;width:1.8px;height:1028px;background:#f0f0f0;"></div>
<div class="b" style="left:1918px;top:0px;width:2px;height:145px;background:#9c9c9c;"></div>
<div class="b" style="left:1918px;top:145px;width:2px;height:60px;background:#5f8a5f;"></div>
<div class="b" style="left:1918px;top:205px;width:2px;height:105px;background:#8c6f5f;"></div>
<div class="b" style="left:1918px;top:310px;width:2px;height:768px;background:#6e6e6e;"></div>
<!-- annotations -->
<svg style="left:0;top:0" width="1920" height="1080" viewBox="0 0 1920 1080"><g fill="none" stroke="#ff3f0c" stroke-width="4.2" stroke-linejoin="round"><rect x="1236.10" y="86.10" width="156.55" height="48.80" rx="0.3"/><rect x="1429.90" y="60.80" width="479.30" height="207.10" rx="0.3"/><rect x="1422.80" y="284.00" width="488.60" height="236.40" rx="0.3"/><rect x="1421.90" y="534.20" width="414.10" height="142.00" rx="0.3"/><rect x="1420.10" y="697.40" width="466.00" height="149.40" rx="0.3"/><rect x="1411.10" y="881.20" width="493.90" height="93.80" rx="0.3"/><rect x="22.10" y="940.00" width="1368.50" height="99.15" rx="0.3"/></g></svg>
</body></html>
